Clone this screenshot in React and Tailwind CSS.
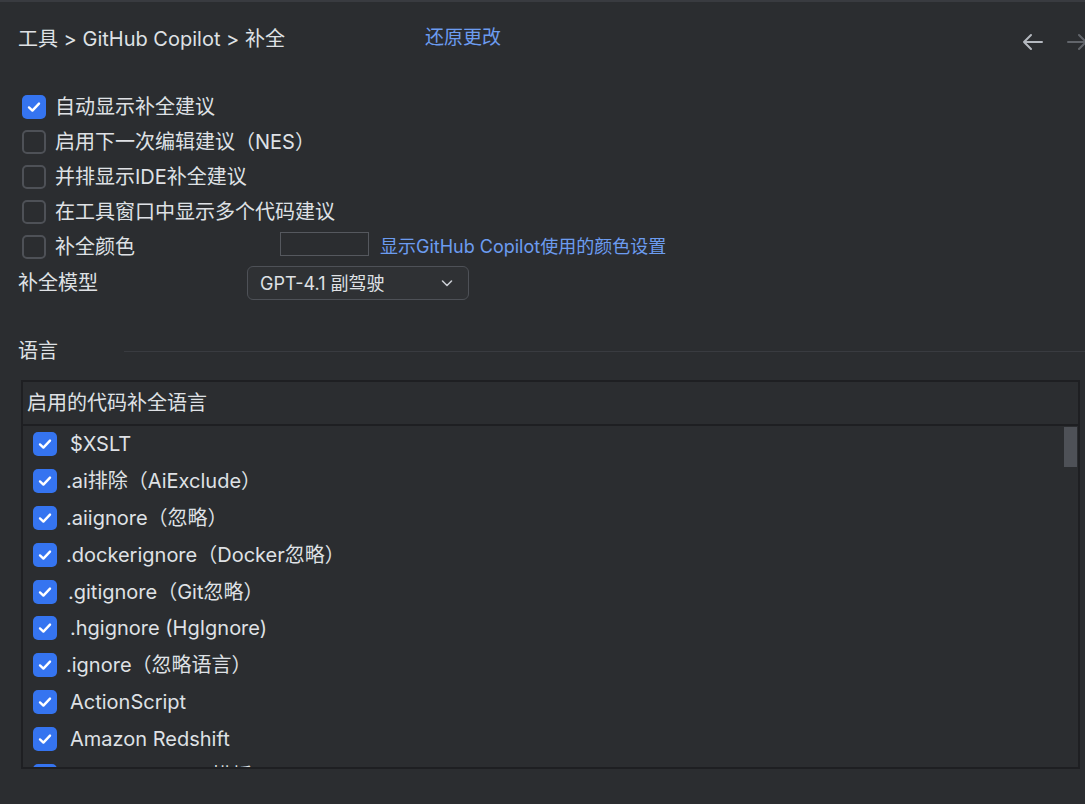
import React from 'react';

const font = { fontFamily: 'Inter, "Noto Sans CJK SC", sans-serif' };

function Check({ checked, className = '' }) {
  if (!checked) {
    return <span className={`block w-[24px] h-[24px] rounded-[5px] border-2 border-[#4e5157] shrink-0 ${className}`} />;
  }
  return (
    <span className={`flex items-center justify-center w-[24px] h-[24px] rounded-[5px] bg-[#3574f0] shrink-0 ${className}`}>
      <svg width="16" height="16" viewBox="0 0 16 16" fill="none">
        <path d="M3 8.4 L6.4 11.6 L13 4.6" stroke="white" strokeWidth="2.4" strokeLinecap="round" strokeLinejoin="round" />
      </svg>
    </span>
  );
}

const options = [
  { label: '自动显示补全建议', checked: true },
  { label: '启用下一次编辑建议（NES）', checked: false },
  { label: '并排显示IDE补全建议', checked: false },
  { label: '在工具窗口中显示多个代码建议', checked: false },
];

// leading dot entries sit a few px further left in the original
const languages = [
  { name: '$XSLT', pad: 'pl-[13px]' },
  { name: '.ai排除（AiExclude）', pad: 'pl-[9px]' },
  { name: '.aiignore（忽略）', pad: 'pl-[9px]' },
  { name: '.dockerignore（Docker忽略）', pad: 'pl-[9px]' },
  { name: '.gitignore（Git忽略）', pad: 'pl-[11px]' },
  { name: '.hgignore (HgIgnore)', pad: 'pl-[13px]' },
  { name: '.ignore（忽略语言）', pad: 'pl-[9px]' },
  { name: 'ActionScript', pad: 'pl-[13px]' },
  { name: 'Amazon Redshift', pad: 'pl-[13px]' },
  { name: 'Angular HTML 模板', pad: 'pl-[13px]' },
];

export default function App() {
  return (
    <div className="w-[1085px] h-[804px] bg-[#2b2d30] text-[#dfe1e5] overflow-hidden border-t-2 border-[#393b40]" style={font}>
      {/* header */}
      <div className="flex items-center h-[70px] pl-[18px] pt-[3px]">
        <div className="w-[407px] text-[20px] text-[#dfe1e5]">工具 &gt; GitHub Copilot &gt; 补全</div>
        <div className="text-[19px] text-[#6c9cf0]">还原更改</div>
        <div className="ml-auto flex items-center gap-[20px] mt-[6px] -mr-[4px]">
          <svg width="24" height="24" viewBox="0 0 24 24" fill="none" stroke="#b4b8bf" strokeWidth="2" strokeLinecap="round" strokeLinejoin="round">
            <path d="M21 12H3M10 5l-7 7 7 7" />
          </svg>
          <svg width="24" height="24" viewBox="0 0 24 24" fill="none" stroke="#62656b" strokeWidth="2" strokeLinecap="round" strokeLinejoin="round">
            <path d="M3 12h18M14 5l7 7-7 7" />
          </svg>
        </div>
      </div>

      {/* options */}
      <div className="flex flex-col pl-[22px] pt-[17px]">
        {options.map((o) => (
          <div key={o.label} className="flex items-center h-[35px] gap-[9px]">
            <Check checked={o.checked} />
            <span className="text-[20px] leading-none">{o.label}</span>
          </div>
        ))}
        <div className="flex items-center h-[35px]">
          <div className="flex items-center gap-[9px] w-[258px]">
            <Check checked={false} />
            <span className="text-[20px] leading-none">补全颜色</span>
          </div>
          <span className="block w-[89px] h-[24px] border border-[#55585e] -mt-[6px]" />
          <span className="ml-[11px] text-[18px] text-[#6c9cf0]">显示GitHub Copilot使用的颜色设置</span>
        </div>
      </div>

      <div className="flex items-center pl-[18px] h-[36px] mt-[1px]">
        <span className="w-[229px] text-[20px]">补全模型</span>
        <div className="flex items-center w-[222px] h-[34px] rounded-[6px] border border-[#4e5157] bg-[#2f3134] px-[12px]">
          <span className="text-[18px]">GPT-4.1 副驾驶</span>
          <svg className="ml-auto mr-[2px]" width="14" height="14" viewBox="0 0 14 14" fill="none" stroke="#c9ccd2" strokeWidth="1.6" strokeLinecap="round" strokeLinejoin="round">
            <path d="M2.5 5l4.5 4.5L11.5 5" />
          </svg>
        </div>
      </div>

      {/* language section */}
      <div className="flex items-center pl-[18px] mt-[35px] h-[30px]">
        <span className="text-[20px]">语言</span>
        <span className="flex-1 h-px bg-[#393b40] ml-[66px]" />
      </div>

      <div className="ml-[21px] mr-[5px] mt-[14px] border-2 border-[#1e1f22] h-[389px] flex flex-col">
        <div className="h-[44px] flex items-center pl-[4px] border-b-2 border-[#1e1f22] shrink-0">
          <span className="text-[20px]">启用的代码补全语言</span>
        </div>
        <div className="relative flex-1 overflow-hidden">
          <div className="flex flex-col">
            {languages.map((l) => (
              <div key={l.name} className="flex items-center h-[36.8px] pl-[10px]">
                <Check checked />
                <span className={`text-[20px] leading-none ${l.pad}`}>{l.name}</span>
              </div>
            ))}
          </div>
          <div className="absolute right-[1px] top-[1px] w-[13px] h-[40px] bg-[#4e5157]" />
        </div>
      </div>
    </div>
  );
}
